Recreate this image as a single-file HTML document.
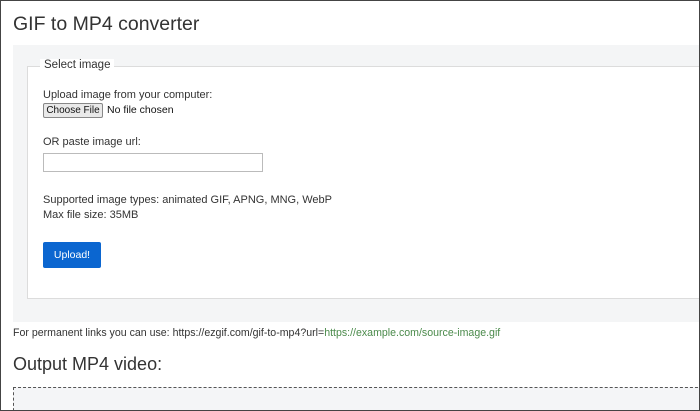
<!DOCTYPE html>
<html><head><style>
*{box-sizing:border-box;margin:0;padding:0}
html,body{width:700px;height:411px;overflow:hidden}
body{background:#fff;font-family:"Liberation Sans",sans-serif;color:#333;position:relative}
.frame{position:absolute;left:0;top:0;width:700px;height:411px;border:1px solid #444;z-index:10;pointer-events:none}
.a{position:absolute;white-space:nowrap}
h1{position:absolute;left:13px;top:13px;font-size:19.5px;font-weight:normal;color:#333;white-space:nowrap}
.panel{position:absolute;left:13px;top:45px;width:700px;height:277px;background:#f4f5f6}
.fs{position:absolute;left:27px;top:66px;width:700px;height:233px;background:#fff;border:1px solid #dcdcdc}
.leg{position:absolute;left:40px;top:59px;background:#fff;padding:0 4px;font-size:11.5px;color:#333;white-space:nowrap}
.t{font-size:11px;color:#333}
.btn{position:absolute;left:43px;top:103px;width:60px;height:15px;border:1px solid #888;background:#e9e9e9;border-radius:2px;font-size:10px;text-align:center;line-height:13px;color:#111;white-space:nowrap}
.inp{position:absolute;left:43px;top:153px;width:220px;height:19px;border:1px solid #bbb;background:#fff}
.up{position:absolute;left:43px;top:242px;width:58px;height:26px;background:#0b66d0;border-radius:2px;color:#fff;font-size:10.5px;text-align:center;line-height:26px}
.box{position:absolute;left:13px;top:387px;width:700px;height:40px;border:1px dashed #555;background:#f4f5f7}
</style></head><body>
<h1>GIF to MP4 converter</h1>
<div class="panel"></div>
<div class="fs"></div>
<div class="leg">Select image</div>
<div class="a t" style="left:43px;top:89px">Upload image from your computer:</div>
<div class="btn">Choose File</div>
<div class="a" style="left:107px;top:104px;font-size:10.5px;color:#111">No file chosen</div>
<div class="a t" style="left:43px;top:136px">OR paste image url:</div>
<div class="inp"></div>
<div class="a t" style="left:43px;top:194px">Supported image types: animated GIF, APNG, MNG, WebP</div>
<div class="a t" style="left:43px;top:209px">Max file size: 35MB</div>
<div class="up">Upload!</div>
<div class="a" style="left:13px;top:327px;font-size:10.6px;color:#333">For permanent links you can use: https://ezgif.com/gif-to-mp4?url=<span style="color:#4a8a4a">https://example.com/source-image.gif</span></div>
<div class="a" style="left:13px;top:354px;font-size:18px;color:#333">Output MP4 video:</div>
<div class="box"></div>
<div class="frame"></div>
</body></html>
